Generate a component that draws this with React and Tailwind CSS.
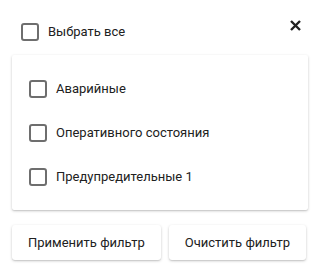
import React, { useState } from "react";

const Box = ({ checked, onClick }) => (
  <span
    onClick={onClick}
    className="w-[18px] h-[18px] rounded-[3px] border-2 border-[#6e6e6e] bg-white shrink-0 flex items-center justify-center"
  >
    {checked && (
      <svg viewBox="0 0 24 24" className="w-[14px] h-[14px]" fill="none" stroke="#6e6e6e" strokeWidth="3">
        <path d="M5 12l5 5 9-10" />
      </svg>
    )}
  </span>
);

const items = ["Аварийные", "Оперативного состояния", "Предупредительные 1"];

const App = () => {
  const [sel, setSel] = useState([false, false, false]);
  const all = sel.every(Boolean);

  return (
    <div className="w-[320px] h-[272px] bg-white px-3 text-[13px] text-[#212121] font-['Roboto',sans-serif]">
      <div className="flex items-center h-[55px] pt-[9px]">
        <label className="flex items-center gap-[9px] ml-[9px] cursor-pointer">
          <Box checked={all} onClick={() => setSel(items.map(() => !all))} />
          <span>Выбрать все</span>
        </label>
        <button className="ml-auto mr-[7px] -mt-[14px] text-[#212121]">
          <svg viewBox="0 0 11 11" className="w-[11px] h-[11px]" stroke="currentColor" strokeWidth="2.4">
            <path d="M1 1l9 9M10 1l-9 9" />
          </svg>
        </button>
      </div>

      <div className="h-[155px] bg-white rounded-[2px] shadow-[0_1px_3px_rgba(0,0,0,0.2),0_1px_1px_rgba(0,0,0,0.08)] flex flex-col pt-[25px] gap-[26px] pl-[17px]">
        {items.map((t, i) => (
          <label key={t} className="flex items-center gap-[9px] h-[18px] cursor-pointer">
            <Box
              checked={sel[i]}
              onClick={() => setSel(sel.map((v, j) => (j === i ? !v : v)))}
            />
            <span>{t}</span>
          </label>
        ))}
      </div>

      <div className="flex gap-2 mt-[15px]">
        <button className="h-[35px] px-4 bg-white rounded-[3px] shadow-[0_1px_3px_rgba(0,0,0,0.2),0_1px_1px_rgba(0,0,0,0.08)] text-[13px]">
          Применить фильтр
        </button>
        <button className="h-[35px] px-4 bg-white rounded-[3px] shadow-[0_1px_3px_rgba(0,0,0,0.2),0_1px_1px_rgba(0,0,0,0.08)] text-[13px]">
          Очистить фильтр
        </button>
      </div>
    </div>
  );
};

export default App;
